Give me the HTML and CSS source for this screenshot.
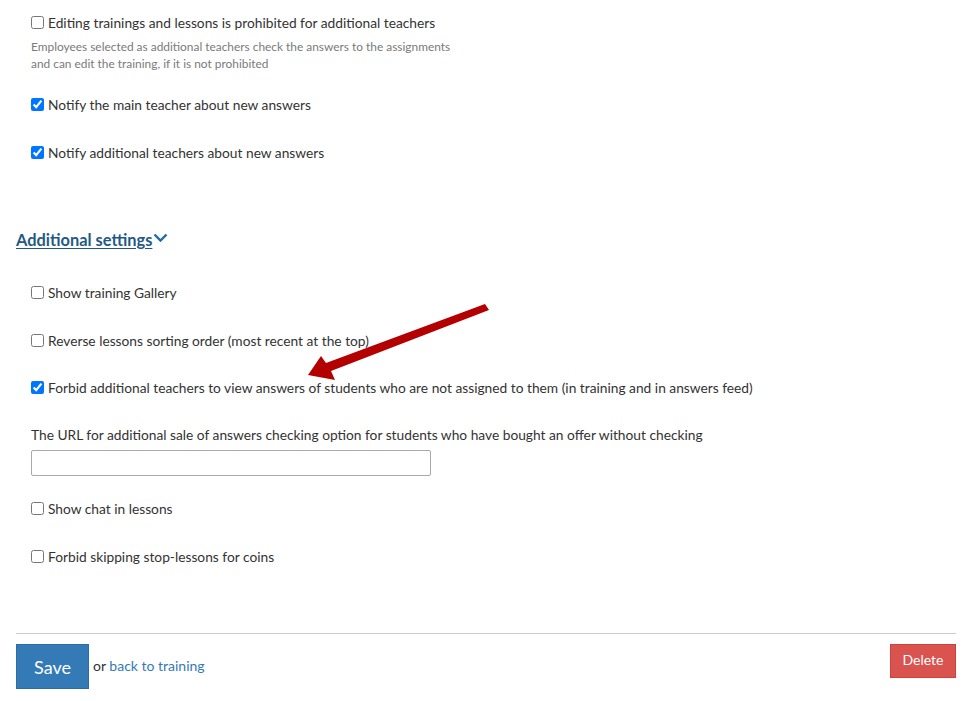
FILE: index.html
```html
<!DOCTYPE html>
<html>
<head>
<meta charset="utf-8">
<link rel="stylesheet" href="styles.css">
</head>
<body>
<div class="page">
  <div class="group">
    <label class="check first"><input type="checkbox"> Editing trainings and lessons is prohibited for additional teachers</label>
    <div class="help">Employees selected as additional teachers check the answers to the assignments<br>and can edit the training, if it is not prohibited</div>
    <label class="check notify1"><input type="checkbox" checked> Notify the main teacher about new answers</label>
    <label class="check row"><input type="checkbox" checked> Notify additional teachers about new answers</label>
  </div>

  <a class="toggle" href="#">Additional settings<svg class="chev" width="15" height="10" viewBox="0 0 15 10"><path d="M1.5 1.5 L7.5 7.5 L13.5 1.5" fill="none" stroke="#1f6da3" stroke-width="2.4"/></svg></a>

  <div class="group adv">
    <label class="check">
      <input type="checkbox"> Show training Gallery</label>
    <label class="check row"><input type="checkbox"> Reverse lessons sorting order (most recent at the top)</label>
    <label class="check row forbid"><input type="checkbox" checked> Forbid additional teachers to view answers of students who are not assigned to them (in training and in answers feed)</label>
    <div class="field">
      <div class="field-label">The URL for additional sale of answers checking option for students who have bought an offer without checking</div>
      <input class="text" type="text">
    </div>
    <label class="check chat"><input type="checkbox"> Show chat in lessons</label>
    <label class="check row"><input type="checkbox"> Forbid skipping stop-lessons for coins</label>
  </div>

  <div class="actions">
    <div class="left">
      <button class="btn save">Save</button>
      <span class="or">or <a href="#">back to training</a></span>
    </div>
    <button class="btn delete">Delete</button>
  </div>

  <svg class="arrow" width="200" height="90" viewBox="0 0 200 90">
    <path d="M195 4 L199 10 L41 71 L45 80 L18 75 L31 56 L36 63 Z" fill="#b30000"/>
  </svg>
</div>
</body>
</html>
```
FILE: styles.css
```css
* { box-sizing: border-box; }
html, body { margin: 0; padding: 0; background: #fff; }
body {
  font-family: Lato, "Open Sans", "Liberation Sans", sans-serif;
  font-size: 13.75px;
  color: #333;
}
.page {
  position: relative;
  padding: 13px 12px 0 16px;
  width: 968px;
  height: 701px;
  overflow: hidden;
}
.group {
  display: flex;
  flex-direction: column;
  padding-left: 15px;
}
.check {
  display: flex;
  align-items: center;
  height: 20px;
  line-height: 20px;
  gap: 4px;
}
.check input {
  margin: 0;
  width: 13px;
  height: 13px;
  position: relative;
  top: -1px;
}
.help {
  font-size: 11.9px;
  color: #7a7a7a;
  line-height: 17px;
  margin-top: 5px;
}
.notify1 { margin-top: 23px; }
.row { margin-top: 28px; }
.forbid { margin-top: 27px; }
.toggle {
  display: inline-flex;
  align-items: center;
  margin-top: 65px;
  height: 22px;
  font-size: 16.4px;
  font-weight: bold;
  color: #1f5a85;
  text-decoration: underline;
  text-underline-offset: 2px;
}
.chev { margin-left: 1px; margin-top: -2px; }
.adv { margin-top: 33px; }
.field { margin-top: 27px; }
.field-label { line-height: 20px; }
.text {
  display: block;
  margin-top: 5px;
  width: 400px;
  height: 26px;
  border: 1px solid #a9a9a9;
  border-radius: 2px;
}
.chat { margin-top: 23px; }
.actions {
  margin-top: 66px;
  border-top: 1px solid #ccc;
  padding-top: 10px;
  display: flex;
  justify-content: space-between;
  align-items: flex-start;
}
.left { display: flex; align-items: center; gap: 4px; }
.btn {
  font-family: inherit;
  color: #fff;
  border-radius: 0;
  cursor: pointer;
}
.save {
  width: 73px;
  height: 45px;
  font-size: 18px;
  background: #337ab7;
  border: 1px solid #2e6da4;
}
.or { color: #333; font-size: 14px; margin-top: -2px; }
.or a { color: #337ab7; text-decoration: none; }
.delete {
  width: 66px;
  height: 34px;
  padding: 0 0 3px;
  font-size: 14px;
  background: #d9534f;
  border: 1px solid #d43f3a;
}
.arrow {
  position: absolute;
  left: 290px;
  top: 300px;
}
```
